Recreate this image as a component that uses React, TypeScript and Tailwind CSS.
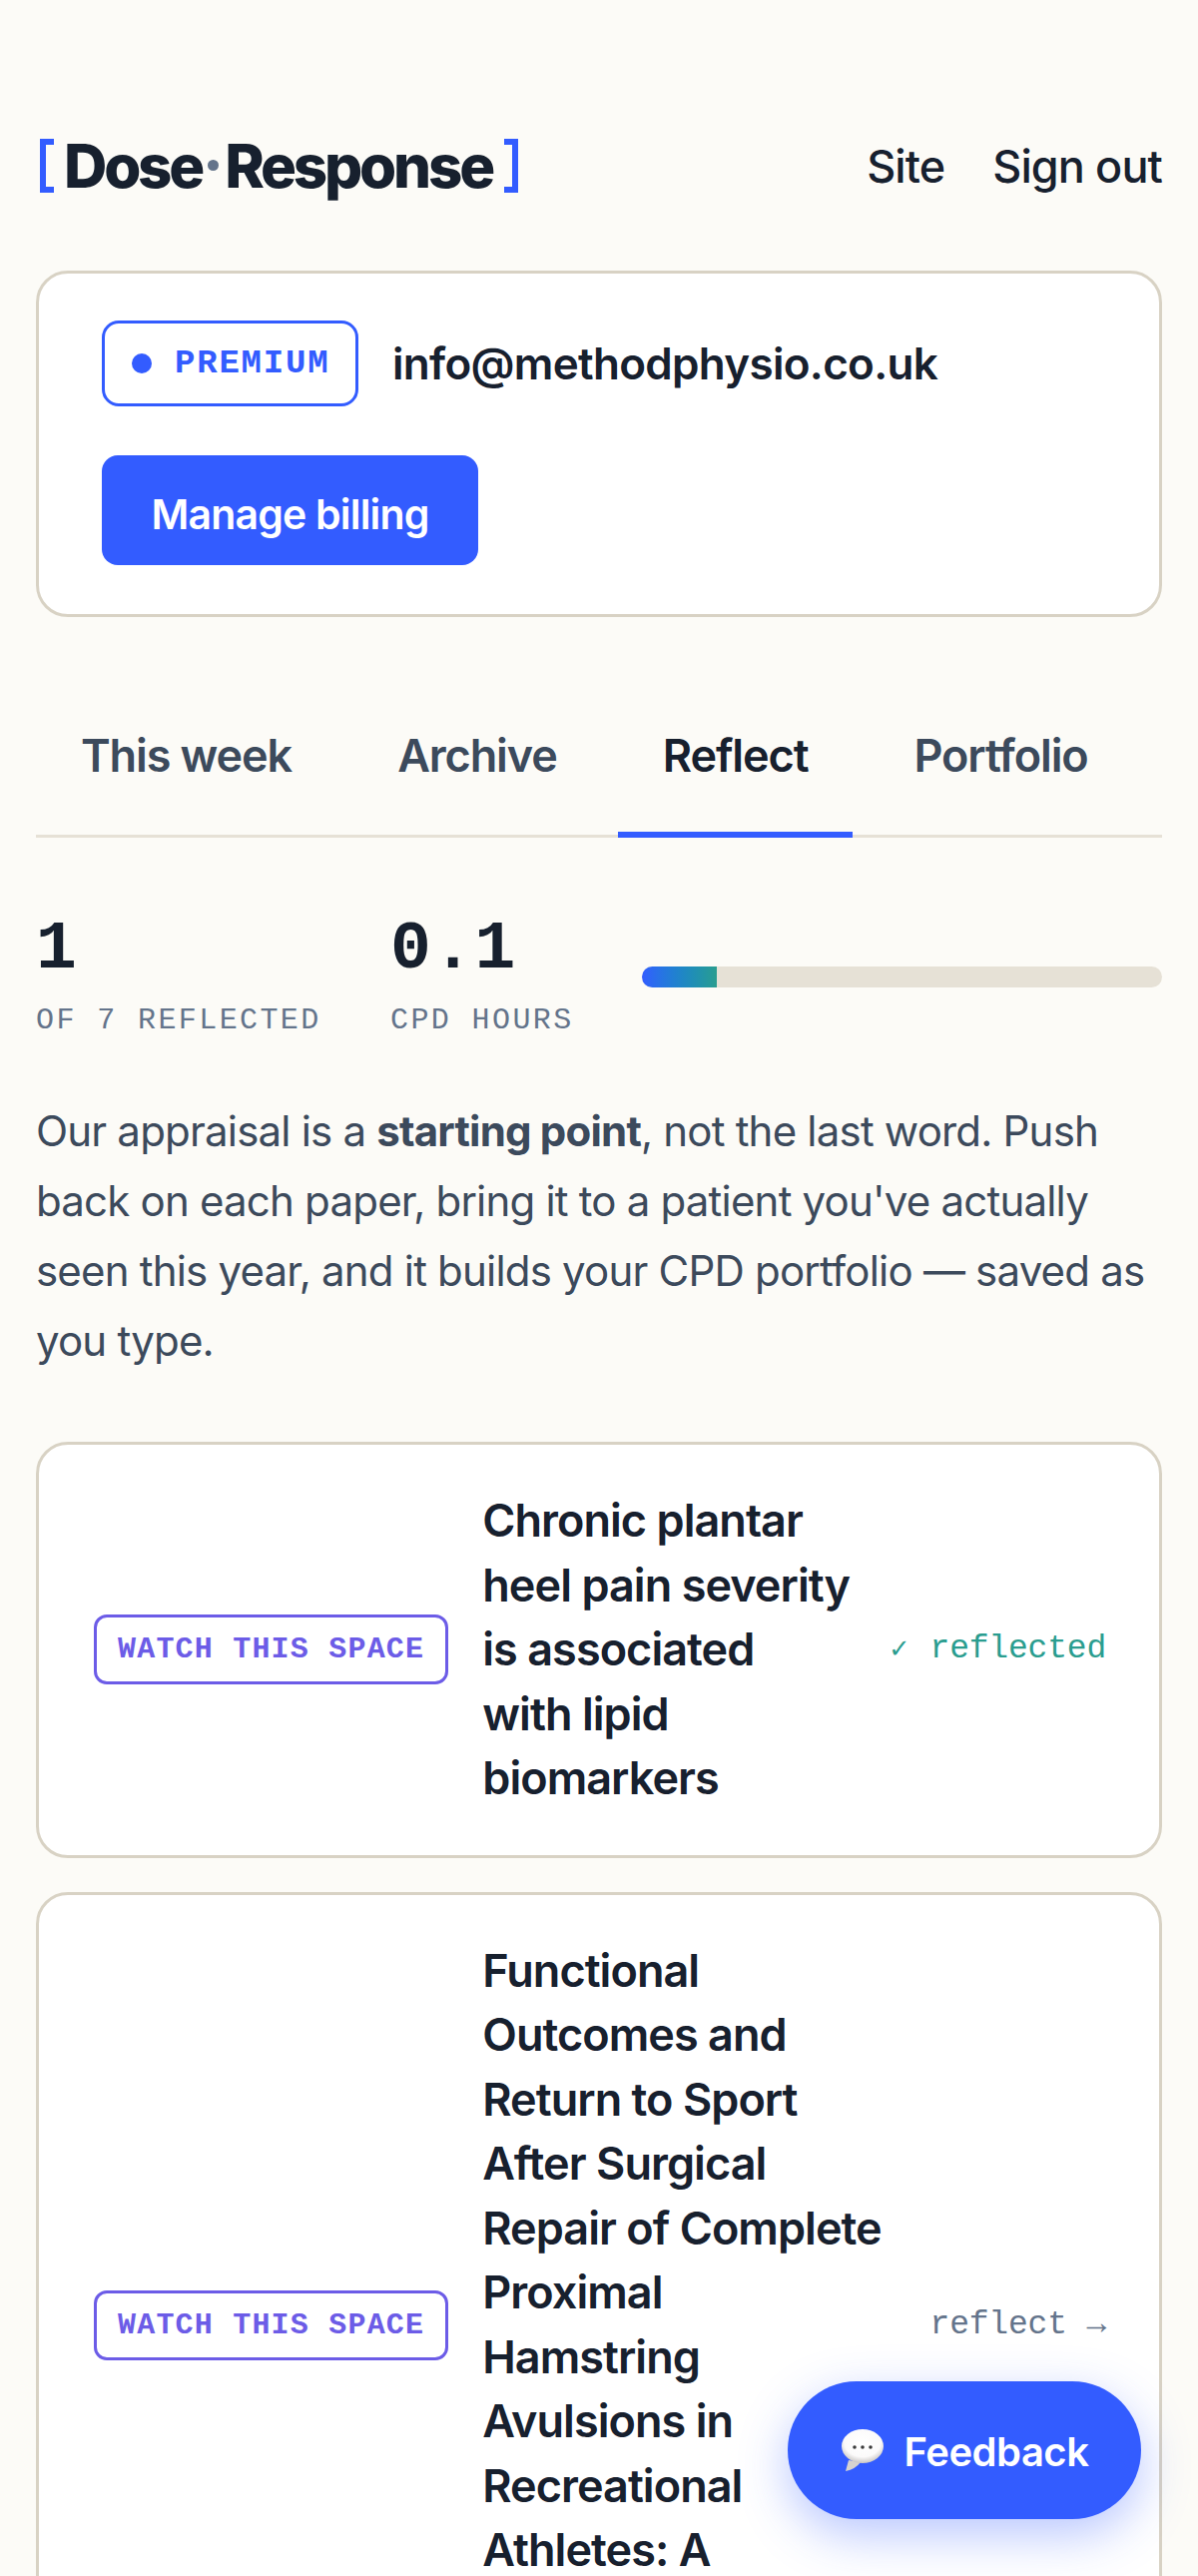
const TABS = ["This week", "Archive", "Reflect", "Portfolio"];
const ACTIVE_TAB = "Reflect";

function SpeechEmoji() {
  return (
    <svg viewBox="0 0 44 44" className="h-[44px] w-[44px] shrink-0" aria-hidden="true">
      <defs>
        <radialGradient id="bubble" cx="50%" cy="38%" r="62%">
          <stop offset="0%" stopColor="#ffffff" />
          <stop offset="70%" stopColor="#fbfafa" />
          <stop offset="100%" stopColor="#c9c6c4" />
        </radialGradient>
      </defs>
      <path d="M8 32 L5 43 Q15 41 20 34 Z" fill="#d6d3d0" />
      <ellipse cx="22" cy="18" rx="21" ry="17" fill="url(#bubble)" />
      <circle cx="14" cy="19" r="1.8" fill="#3a3a3a" />
      <circle cx="22" cy="19" r="1.8" fill="#3a3a3a" />
      <circle cx="30" cy="19" r="1.8" fill="#3a3a3a" />
    </svg>
  );
}

function PaperRow({ title, reflected }: { title: string[]; reflected: boolean }) {
  return (
    <article className="flex items-center gap-[34px] rounded-[32px] border-[3px] border-[#d8d2c4] bg-white py-[44px] pr-[53px] pl-[55px]">
      <span className="shrink-0 rounded-[13px] border-[3px] border-[#6c5ce7] px-[21px] py-[15px] font-['Liberation_Mono'] text-[30px] leading-[34px] font-bold tracking-[1.2px] text-[#6c5ce7]">
        WATCH THIS SPACE
      </span>
      <h3 className="min-w-0 flex-1 text-[45px] leading-[64.5px] font-semibold tracking-[-0.95px] text-[#17202e]">
        {title.map((line) => (
          <span key={line} className="block whitespace-nowrap">
            {line}
          </span>
        ))}
      </h3>
      {reflected ? (
        <span className="shrink-0 font-['Liberation_Mono'] text-[33px] leading-[40px] tracking-[-0.2px] text-[#2a9d8f]">
          <span className="text-[26px]">✓</span> reflected
        </span>
      ) : (
        <span className="shrink-0 font-['Liberation_Mono'] text-[33px] leading-[40px] tracking-[-0.2px] text-[#64748b]">reflect →</span>
      )}
    </article>
  );
}

export default function App() {
  return (
    <div className="relative h-[2580px] overflow-hidden bg-[#fcfbf7] px-[36px] font-['Inter',sans-serif] text-[#17202e]">
      <header className="flex h-[271px] items-center justify-between pt-[60px]">
        <div className="flex items-center pl-[4px] text-[60px] leading-[70px] font-extrabold tracking-[-3.2px]">
          <span className="mr-[10px] h-[54px] w-[14px] border-[6px] border-r-0 border-[#335cff]" />
          <span>Dose</span>
          <span className="mx-[6px] h-[11px] w-[11px] rounded-full bg-[#64748b]" />
          <span>Response</span>
          <span className="ml-[12px] h-[54px] w-[14px] border-[6px] border-l-0 border-[#335cff]" />
        </div>
        <nav className="flex items-center gap-[48px] pt-[2px] text-[45px] leading-[56px] font-medium tracking-[-0.9px]">
          <a>Site</a>
          <a>Sign out</a>
        </nav>
      </header>

      <section className="h-[347px] rounded-[32px] border-[3px] border-[#d8d2c4] bg-white px-[63px] pt-[47px]">
        <div className="flex items-center gap-[34px]">
          <span className="flex h-[86px] w-[257px] items-center gap-[23px] rounded-[17px] border-[3px] border-[#335cff] pl-[27px] font-['Liberation_Mono'] text-[34px] font-bold tracking-[1.8px] text-[#335cff]">
            <span className="h-[20px] w-[20px] rounded-full bg-[#335cff]" />
            PREMIUM
          </span>
          <span className="text-[44px] leading-[56px] font-semibold tracking-[-0.7px]">info@methodphysio.co.uk</span>
        </div>
        <button className="mt-[49px] h-[110px] w-[377px] rounded-[16px] bg-[#335cff] pt-[10px] text-[41px] font-semibold tracking-[-0.8px] text-white">
          Manage billing
        </button>
      </section>

      <nav className="mt-[87px] flex gap-[16px] border-b-[3px] border-[#e6e1d6]">
        {TABS.map((tab) => (
          <a
            key={tab}
            className={`-mb-[3px] border-b-[6px] px-[45px] pt-[24px] pb-[48px] text-[45px] leading-[56px] font-semibold tracking-[-1.1px] ${
              tab === ACTIVE_TAB ? "border-[#335cff] text-[#17202e]" : "border-transparent text-[#3c4a5c]"
            }`}
          >
            {tab}
          </a>
        ))}
      </nav>

      <section className="mt-[72px] flex items-start">
        <div className="w-[355px]">
          <div className="font-['Liberation_Mono'] text-[68px] leading-[80px] font-bold text-[#17202e]">1</div>
          <div className="mt-[13px] font-['Liberation_Mono'] text-[30px] leading-[36px] tracking-[2.4px] text-[#64748b]">OF 7 REFLECTED</div>
        </div>
        <div className="w-[252px]">
          <div className="font-['Liberation_Mono'] text-[68px] leading-[80px] font-bold tracking-[1.5px] text-[#17202e]">0.1</div>
          <div className="mt-[13px] font-['Liberation_Mono'] text-[30px] leading-[36px] tracking-[2.4px] text-[#64748b]">CPD HOURS</div>
        </div>
        <div className="mt-[57px] h-[21px] flex-1 overflow-hidden rounded-full bg-[#e6e1d6]">
          <div className="h-full w-[14.3%] bg-gradient-to-r from-[#335cff] to-[#2a9d8f]" />
        </div>
      </section>

      <p className="mt-[58px] text-[42px] leading-[70px] tracking-[-0.8px] text-[#3c4a5c]">
        Our appraisal is a <strong className="font-bold">starting point</strong>, not the last word. Push
        <br />
        back on each paper, bring it to a patient you've actually
        <br />
        seen this year, and it builds your CPD portfolio — saved as
        <br />
        you type.
      </p>

      <div className="mt-[66px] flex flex-col gap-[34px]">
        <PaperRow title={["Chronic plantar", "heel pain severity", "is associated", "with lipid", "biomarkers"]} reflected />
        <PaperRow
          title={[
            "Functional",
            "Outcomes and",
            "Return to Sport",
            "After Surgical",
            "Repair of Complete",
            "Proximal",
            "Hamstring",
            "Avulsions in",
            "Recreational",
            "Athletes: A",
            "Systematic",
            "Review",
          ]}
          reflected={false}
        />
      </div>

      <button className="absolute top-[2385px] left-[789px] flex h-[138px] w-[354px] items-center justify-center gap-[20px] rounded-full bg-[#335cff] text-[40px] font-semibold tracking-[-0.5px] text-white shadow-[0_16px_48px_rgba(51,92,255,0.34)]">
        <SpeechEmoji />
        <span className="pt-[4px]">Feedback</span>
      </button>
    </div>
  );
}
